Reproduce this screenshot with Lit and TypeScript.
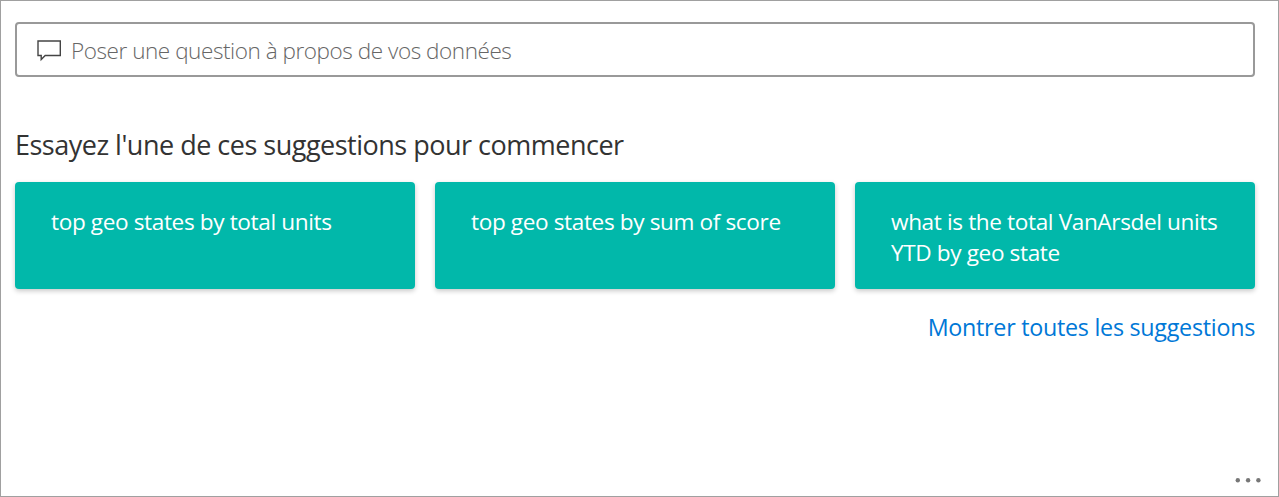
import { LitElement, html, css } from "lit";
import { customElement, property } from "lit/decorators.js";

@customElement("suggestion-card")
class SuggestionCard extends LitElement {
  @property() label = "";

  static styles = css`
    :host {
      display: block;
      box-sizing: border-box;
      height: 107px;
      padding: 24px 36px 0;
      border-radius: 4px;
      background: #01b8aa;
      box-shadow: 0 2px 5px rgba(0, 0, 0, 0.22);
      color: #fff;
      font-size: 22.6px;
      letter-spacing: -0.38px;
      line-height: 31px;
      cursor: pointer;
    }
    .label {
      white-space: pre;
    }
  `;

  render() {
    return html`<span class="label">${this.label}</span>`;
  }
}

@customElement("app-root")
class AppRoot extends LitElement {
  private suggestions = [
    "top geo states by total units",
    "top geo states by sum of score",
    "what is the total VanArsdel units\nYTD by geo state",
  ];

  static styles = css`
    :host {
      display: flex;
      flex-direction: column;
      box-sizing: border-box;
      height: 100vh;
      padding: 21px 23px 0 14px;
      border: 1px solid #a0a0a0;
      background: #fff;
      font-family: "Open Sans", "Noto Sans", sans-serif;
      white-space: nowrap;
    }
    .ask {
      display: flex;
      align-items: center;
      box-sizing: border-box;
      height: 55px;
      padding-left: 20px;
      border: 2px solid #999;
      border-radius: 4px;
      color: #666;
      font-size: 22.5px;
      font-weight: 300;
      letter-spacing: -0.44px;
    }
    .bubble {
      width: 26px;
      height: 24px;
      margin-right: 8px;
    }
    .prompt {
      padding-top: 2px;
    }
    .title {
      margin: 49px 0 0;
      height: 56px;
      color: #333;
      font-size: 27px;
      font-weight: 400;
      letter-spacing: -0.5px;
      line-height: 38px;
    }
    .cards {
      display: grid;
      grid-template-columns: repeat(3, 400px);
      gap: 20px;
    }
    .all {
      align-self: flex-end;
      margin-top: 21px;
      color: #0078d7;
      font-size: 23.3px;
      letter-spacing: -0.27px;
      line-height: 34px;
    }
    .more {
      align-self: flex-end;
      width: 28px;
      height: 6px;
      margin: auto -8px 13px 0;
    }
  `;

  render() {
    return html`
      <div class="ask">
        <svg class="bubble" viewBox="0 0 26 24" fill="none" stroke="#444" stroke-width="1.4">
          <path d="M1 3H23.3V17.5H8.2L4.2 21.6V17.5H1Z" />
        </svg>
        <span class="prompt">Poser une question à propos de vos données</span>
      </div>
      <h1 class="title">Essayez l'une de ces suggestions pour commencer</h1>
      <div class="cards">
        ${this.suggestions.map((s) => html`<suggestion-card .label=${s}></suggestion-card>`)}
      </div>
      <a class="all">Montrer toutes les suggestions</a>
      <svg class="more" viewBox="0 0 28 6" fill="#777">
        <circle cx="2.8" cy="3.2" r="2.2" />
        <circle cx="13.1" cy="3.2" r="2.2" />
        <circle cx="23.4" cy="3.2" r="2.2" />
      </svg>
    `;
  }
}
